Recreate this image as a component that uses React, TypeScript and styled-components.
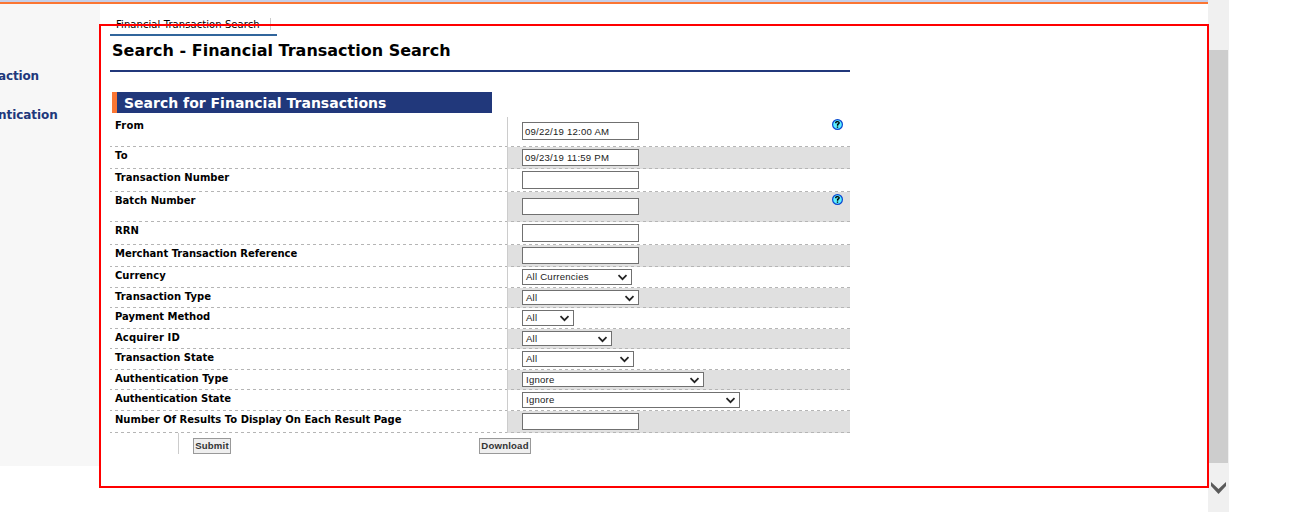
import React from "react";
import styled, { createGlobalStyle } from "styled-components";

const Global = createGlobalStyle`
  * { box-sizing: border-box; }
  html, body { margin: 0; background: #fff; overflow: hidden; }
  body { font-family: "DejaVu Sans", Verdana, sans-serif; color: #000; }
`;

const Screen = styled.div`
  position: relative;
  display: flex;
  width: 1308px;
  height: 512px;
  overflow: hidden;
`;

const Page = styled.div`
  width: 1208px;
  display: flex;
  flex-direction: column;
`;

const TopBar = styled.div`
  height: 4px;
  background: #c6cfe8;
  border-bottom: 2px solid #fb7633;
`;

const Body = styled.div`
  display: flex;
`;

const Sidebar = styled.nav`
  width: 100px;
  height: 462px;
  padding-top: 62px;
  background: #f7f7f7;
  display: flex;
  flex-direction: column;
  gap: 19px;
  overflow: hidden;
`;

const SideLink = styled.a<{ $spacing: number }>`
  margin-left: -2px;
  height: 20px;
  line-height: 20px;
  font-size: 12px;
  font-weight: bold;
  letter-spacing: ${(p) => p.$spacing}px;
  color: #21387b;
  white-space: nowrap;
`;

const Content = styled.main`
  width: 740px;
  margin-left: 10px;
  display: flex;
  flex-direction: column;
`;

const Crumb = styled.div`
  width: 167px;
  height: 32px;
  padding: 14px 0 0 6px;
  border-bottom: 2px solid #31659c;
`;

const CrumbText = styled.div`
  width: 155px;
  height: 12px;
  line-height: 13px;
  font-size: 10px;
  border-right: 1px solid #ccc;
  letter-spacing: 0.07px;
  white-space: nowrap;
`;

const Title = styled.h1`
  margin: 0;
  height: 36px;
  padding-left: 2px;
  line-height: 30px;
  font-size: 16px;
  letter-spacing: 0;
  border-bottom: 2px solid #21387b;
  white-space: nowrap;
`;

const Section = styled.h2`
  margin: 20px 0 4px 2px;
  width: 380px;
  height: 21px;
  padding-left: 7px;
  line-height: 23px;
  font-size: 14px;
  letter-spacing: 0;
  color: #fff;
  background: #21387b;
  border-left: 5px solid #fb7633;
  white-space: nowrap;
`;

const Row = styled.div<{ $height: number }>`
  display: grid;
  grid-template-columns: 397px 343px;
  height: ${(p) => p.$height}px;
`;

const dashes = `repeating-linear-gradient(90deg, #b5b5b5 0 3px, transparent 3px 6px)`;

const Label = styled.div<{ $spacing: number }>`
  padding-left: 5px;
  line-height: 18px;
  font-size: 10px;
  font-weight: bold;
  letter-spacing: ${(p) => p.$spacing}px;
  white-space: nowrap;
  background: ${dashes} -1px 100% / 402px 1px no-repeat;
`;

const Cell = styled.div<{ $shaded: boolean; $top: number }>`
  display: flex;
  justify-content: space-between;
  align-items: flex-start;
  padding: ${(p) => p.$top}px 7px 0 14px;
  border-left: 1px solid #ccc;
  background: ${dashes} -3px 100% / 348px 1px no-repeat ${(p) => (p.$shaded ? "#e0e0e0" : "#fff")};
`;

const Field = styled.div<{ $width: number; $height: number }>`
  display: flex;
  align-items: center;
  justify-content: space-between;
  width: ${(p) => p.$width}px;
  height: ${(p) => p.$height}px;
  padding: 0 3px 0 2px;
  border: 1px solid #707070;
  background: #fff;
  color: #222;
  font: 9.6px "Liberation Sans", Arial, sans-serif;
  letter-spacing: 0.22px;
  white-space: nowrap;
`;

const Select = styled(Field)`
  padding: 0 3px 1px 3px;

  svg {
    margin-top: 1px;
  }
`;

const HelpIcon = styled.svg<{ $lift: number }>`
  margin-top: ${(p) => -p.$lift}px;
`;

const Actions = styled.div`
  display: flex;
  align-items: flex-start;
  height: 21px;
  margin-left: 68px;
  padding: 5px 0 0 14px;
  border-left: 1px solid #ccc;
`;

const Button = styled.button<{ $width: number; $gap?: number }>`
  display: flex;
  justify-content: center;
  width: ${(p) => p.$width}px;
  height: 16px;
  margin-left: ${(p) => p.$gap ?? 0}px;
  padding: 0;
  border: 1px solid #999;
  background: #efefef;
  color: #333;
  font: bold 9.6px/14px "Liberation Sans", Arial, sans-serif;
  letter-spacing: 0.2px;
  white-space: nowrap;
`;

const Scrollbar = styled.div`
  width: 21px;
  height: 512px;
  padding: 50px 1px 0;
  background: #f0f0f0;
  display: flex;
  flex-direction: column;
  gap: 19px;
`;

const Thumb = styled.div`
  height: 413px;
  background: #cdcdcd;
`;

const Highlight = styled.div`
  position: absolute;
  left: 99px;
  top: 24px;
  width: 1110px;
  height: 464px;
  border: 2px solid #f00;
  pointer-events: none;
`;

type Item = {
  label: string;
  height: number;
  kind: "input" | "select";
  value?: string;
  width: number;
  field: number;
  top?: number;
  help?: boolean;
  spacing?: number;
};

const items: Item[] = [
  { label: "From", height: 30, kind: "input", value: "09/22/19 12:00 AM", width: 117, field: 18, top: 5, help: true, spacing: 0.15 },
  { label: "To", height: 22, kind: "input", value: "09/23/19 11:59 PM", width: 117, field: 17, spacing: 0.3 },
  { label: "Transaction Number", height: 23, kind: "input", width: 117, field: 18, spacing: 0.04 },
  { label: "Batch Number", height: 30, kind: "input", width: 117, field: 17, top: 6, help: true },
  { label: "RRN", height: 23, kind: "input", width: 117, field: 18 },
  { label: "Merchant Transaction Reference", height: 22, kind: "input", width: 117, field: 17, spacing: -0.02 },
  { label: "Currency", height: 21, kind: "select", value: "All Currencies", width: 110, field: 16 },
  { label: "Transaction Type", height: 20, kind: "select", value: "All", width: 117, field: 15, spacing: 0.08 },
  { label: "Payment Method", height: 21, kind: "select", value: "All", width: 52, field: 16 },
  { label: "Acquirer ID", height: 20, kind: "select", value: "All", width: 90, field: 15, spacing: 0.12 },
  { label: "Transaction State", height: 21, kind: "select", value: "All", width: 112, field: 16 },
  { label: "Authentication Type", height: 20, kind: "select", value: "Ignore", width: 182, field: 15 },
  { label: "Authentication State", height: 21, kind: "select", value: "Ignore", width: 218, field: 16, spacing: -0.08 },
  { label: "Number Of Results To Display On Each Result Page", height: 22, kind: "input", width: 117, field: 17 },
];

const Chevron = () => (
  <svg width="11" height="8" viewBox="0 0 11 8">
    <path d="M1.5 2.2 5.5 6.2 9.5 2.2" fill="none" stroke="#222" strokeWidth="1.7" />
  </svg>
);

const Help = ({ lift }: { lift: number }) => (
  <HelpIcon $lift={lift} width="11" height="11" viewBox="0 0 11 11">
    <circle cx="5.5" cy="5.5" r="4.9" fill="#5cf0ff" stroke="#0b45cf" strokeWidth="1.2" />
    <path d="M3.8 4.2V3.4Q4 2.6 5.5 2.6T7.2 3.8Q7.2 4.7 5.6 5.5V6.7M5.5 7.6V8.8" fill="none" stroke="#000" strokeWidth="1.4" />
  </HelpIcon>
);

export default function App() {
  return (
    <Screen>
      <Global />
      <Page>
        <TopBar />
        <Body>
          <Sidebar>
            <SideLink $spacing={-0.15}>action</SideLink>
            <SideLink $spacing={-0.05}>ntication</SideLink>
          </Sidebar>
          <Content>
            <Crumb>
              <CrumbText>Financial Transaction Search</CrumbText>
            </Crumb>
            <Title>Search - Financial Transaction Search</Title>
            <Section>Search for Financial Transactions</Section>
            {items.map((it, i) => (
              <Row key={it.label} $height={it.height}>
                <Label $spacing={it.spacing ?? 0}>{it.label}</Label>
                <Cell $shaded={i % 2 === 1} $top={it.top ?? 2}>
                  {it.kind === "input" ? (
                    <Field $width={it.width} $height={it.field}>{it.value}</Field>
                  ) : (
                    <Select $width={it.width} $height={it.field}>
                      {it.value}
                      <Chevron />
                    </Select>
                  )}
                  {it.help && <Help lift={(it.top ?? 2) - 2} />}
                </Cell>
              </Row>
            ))}
            <Actions>
              <Button $width={38}>Submit</Button>
              <Button $width={52} $gap={248}>Download</Button>
            </Actions>
          </Content>
        </Body>
      </Page>
      <Scrollbar>
        <Thumb />
        <svg width="19" height="14" viewBox="0 0 19 14">
          <path d="M2 0 9.5 7 17 0V4L9.5 12 2 4Z" fill="#5a5a5a" />
        </svg>
      </Scrollbar>
      <Highlight />
    </Screen>
  );
}
